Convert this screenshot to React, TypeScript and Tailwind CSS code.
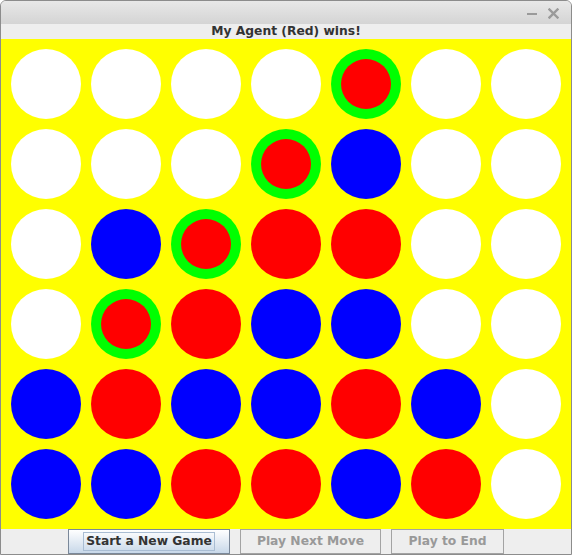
import React from 'react'

type Cell = 'w' | 'r' | 'b' | 'g'

// g = winning red disc (green ring)
const board: Cell[][] = [
  ['w', 'w', 'w', 'w', 'g', 'w', 'w'],
  ['w', 'w', 'w', 'g', 'b', 'w', 'w'],
  ['w', 'b', 'g', 'r', 'r', 'w', 'w'],
  ['w', 'g', 'r', 'b', 'b', 'w', 'w'],
  ['b', 'r', 'b', 'b', 'r', 'b', 'w'],
  ['b', 'b', 'r', 'r', 'b', 'r', 'w'],
]

function Disc({ cell }: { cell: Cell }) {
  if (cell === 'g') {
    return (
      <div className="w-[70px] h-[70px] rounded-full bg-[#00ff00] flex items-center justify-center">
        <div className="w-[50px] h-[50px] rounded-full bg-[#ff0000]" />
      </div>
    )
  }
  const color = cell === 'r' ? 'bg-[#ff0000]' : cell === 'b' ? 'bg-[#0000ff]' : 'bg-white'
  return <div className={`w-[70px] h-[70px] rounded-full ${color}`} />
}

export default function App() {
  return (
    <div
      className="w-[572px] h-[555px] bg-[#eeeeee] border border-[#8c8c8c] rounded-t-[6px] overflow-hidden flex flex-col"
      style={{ fontFamily: '"DejaVu Sans", Verdana, sans-serif' }}
    >
      <div className="h-[23px] shrink-0 bg-gradient-to-b from-[#e8e8e8] to-[#d4d4d4] flex items-center justify-end pr-[12px] gap-[11px]">
        <div className="w-[10px] h-[2px] bg-[#9a9a9a] mt-[2px]" />
        <svg width="11" height="11" viewBox="0 0 11 11" className="mt-[1px]">
          <path d="M1.5 1.5 L9.5 9.5 M9.5 1.5 L1.5 9.5" stroke="#9a9a9a" strokeWidth="2.4" strokeLinecap="square" />
        </svg>
      </div>

      <div className="h-[15px] shrink-0 flex items-center justify-center text-[12.3px] leading-[15px] font-bold text-[#333333]">
        My Agent (Red) wins!
      </div>

      <div className="h-[490px] shrink-0 bg-[#ffff00] pl-[10px] pt-[10px] grid grid-cols-[repeat(7,80px)] grid-rows-[repeat(6,80px)]">
        {board.map((row, r) =>
          row.map((cell, c) => <Disc key={`${r}-${c}`} cell={cell} />)
        )}
      </div>

      <div className="flex-1 flex justify-center items-start gap-[10px]">
        <button className="w-[162px] h-[25px] border border-[#7a8899] bg-gradient-to-b from-[#ffffff] to-[#c8d8e9] flex items-center justify-center">
          <span className="border border-[#a9bdd3] px-[2px] h-[19px] flex items-center text-[12.3px] font-bold text-[#333333]">
            Start a New Game
          </span>
        </button>
        <button className="w-[141px] h-[25px] border border-[#a3a3a3] bg-[#eeeeee] flex items-center justify-center text-[12.3px] font-bold text-[#999999]">
          Play Next Move
        </button>
        <button className="w-[113px] h-[25px] border border-[#a3a3a3] bg-[#eeeeee] flex items-center justify-center text-[12.3px] font-bold text-[#999999]">
          Play to End
        </button>
      </div>
    </div>
  )
}
